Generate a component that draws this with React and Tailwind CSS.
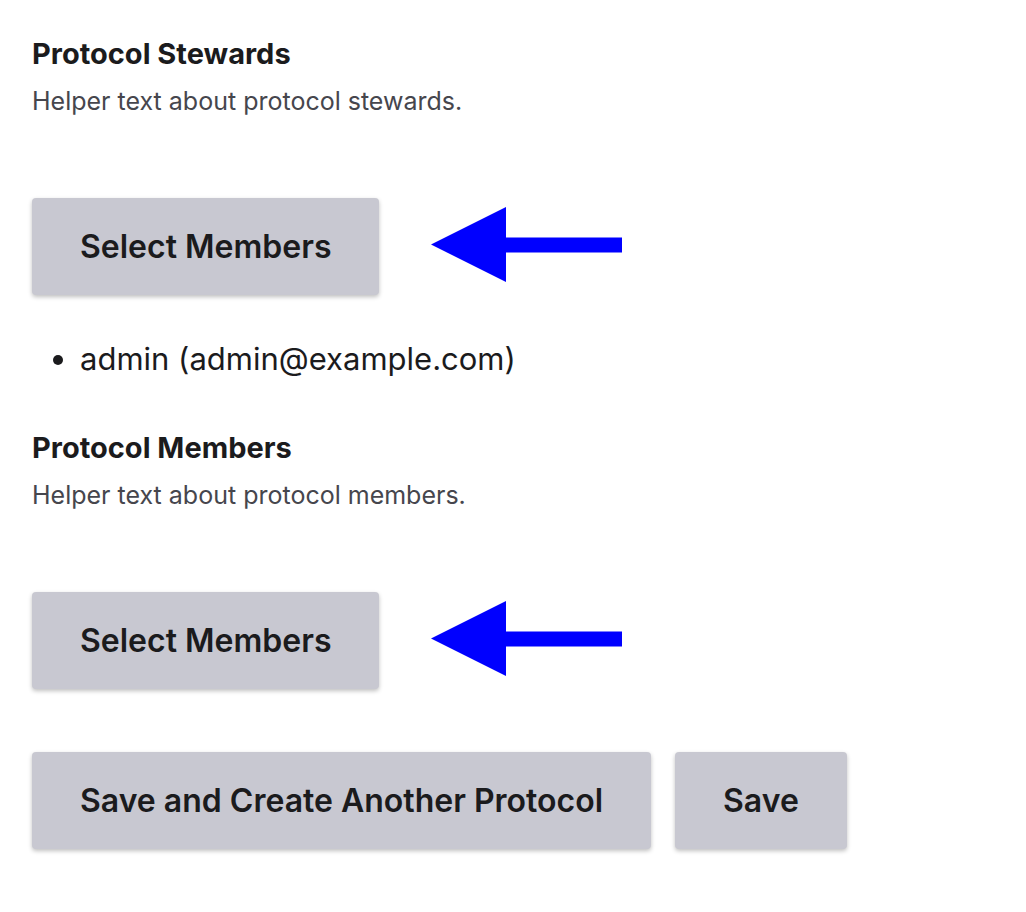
const buttonClass =
  "h-[97px] rounded-[4px] bg-[#c8c8d1] px-12 text-[32px] leading-10 font-semibold text-[#1b1b1d] shadow-[0_2px_4px_rgba(0,0,0,0.25)]";

function Arrow() {
  return (
    <svg className="mt-[9px]" width="192" height="76" viewBox="0 0 192 76" fill="#0000ff" aria-hidden="true">
      <path d="M0 37.500 75 0V30.500H191V45.500H75V75Z" />
    </svg>
  );
}

function MemberField({ title, helper, members }) {
  return (
    <section>
      <h2 className="text-[29px] leading-9 font-bold">{title}</h2>
      <p className="mt-[11px] text-[25px] leading-9 text-[#46464d]">{helper}</p>
      <div className="mt-[79px] flex items-start gap-[52px]">
        <button type="button" className={buttonClass}>
          Select Members
        </button>
        <Arrow />
      </div>
      {members.length > 0 && (
        <ul className="mt-11 list-disc pl-12 text-[31px] leading-10">
          {members.map((member) => (
            <li key={member}>{member}</li>
          ))}
        </ul>
      )}
    </section>
  );
}

export default function App() {
  return (
    <main className="min-h-screen bg-white px-8 pt-9 pb-12 font-['Inter',sans-serif] text-[#1b1b1d]">
      <form onSubmit={(event) => event.preventDefault()}>
        <div className="flex flex-col gap-[51px]">
          <MemberField
            title="Protocol Stewards"
            helper="Helper text about protocol stewards."
            members={["admin (admin@example.com)"]}
          />
          <MemberField
            title="Protocol Members"
            helper="Helper text about protocol members."
            members={[]}
          />
        </div>
        <div className="mt-[63px] flex flex-wrap gap-6">
          <button type="submit" className={buttonClass}>
            Save and Create Another Protocol
          </button>
          <button type="submit" className={buttonClass}>
            Save
          </button>
        </div>
      </form>
    </main>
  );
}
